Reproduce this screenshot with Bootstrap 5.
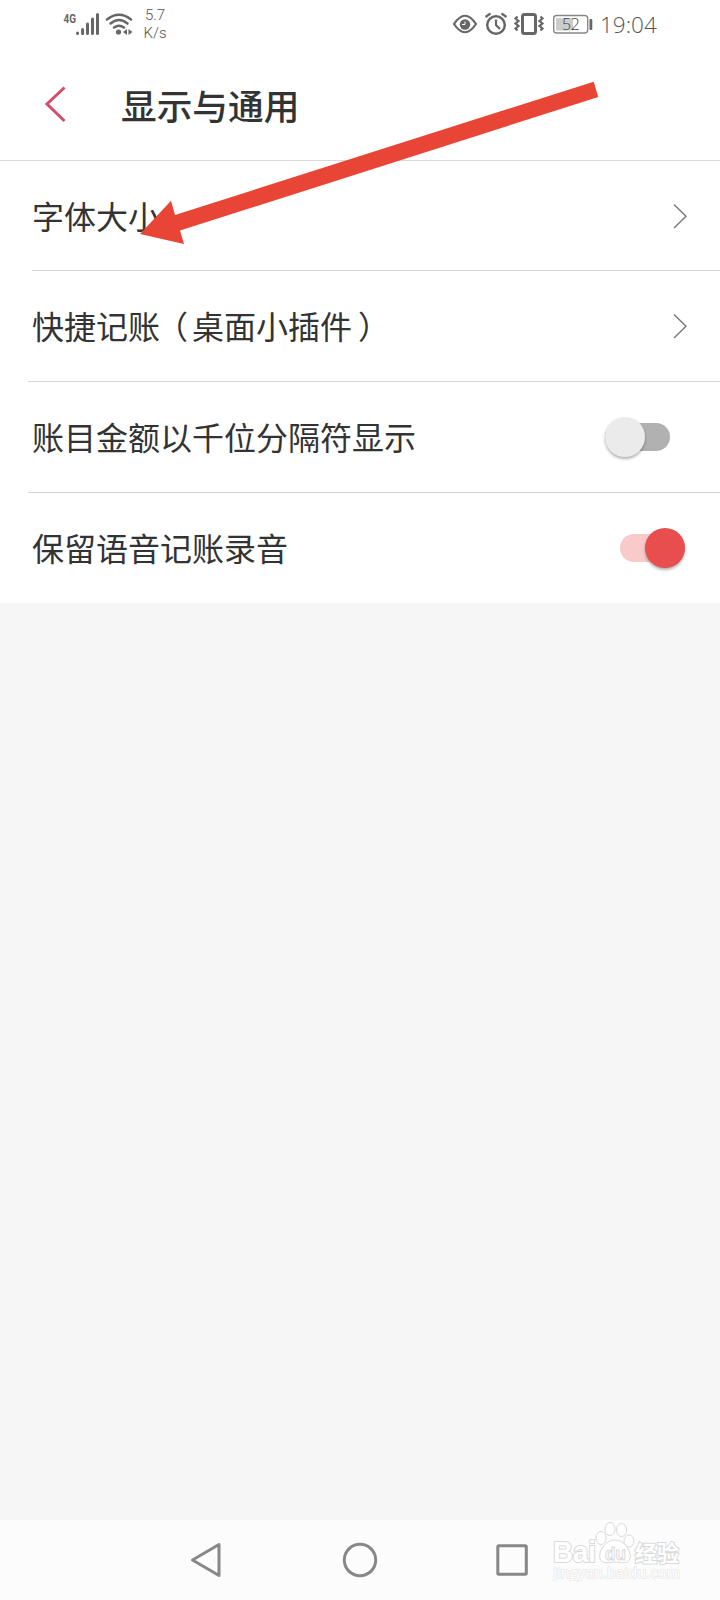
<!DOCTYPE html>
<html lang="zh-CN">
<head>
<meta charset="utf-8">
<meta name="viewport" content="width=device-width, initial-scale=1">
<title>显示与通用</title>
<link href="https://cdn.jsdelivr.net/npm/bootstrap@5.3.0/dist/css/bootstrap.min.css" rel="stylesheet">
<style>
body{font-family:"Noto Sans CJK SC",sans-serif;background:#f6f6f6;color:#333;height:1600px;overflow:hidden}
svg{display:block;flex:none}
.statusbar{height:50px;padding:0 63px 0 63px;color:#666}
.speed{font:300 15px/18px Roboto,sans-serif;padding-top:6px;margin-left:5px;color:#555;width:30px;text-align:center}
.clock{font:300 22.5px/49px "Open Sans",sans-serif;color:#555;width:57px;margin-left:2px;white-space:nowrap}
.titlebar{height:111px;padding:0 44px 0 44px;border-bottom:1px solid #d7dadc}
.titlebar h1{font-size:35.7px;font-weight:500;line-height:54px;margin:0 0 0 55px;color:#333}
.setting{height:111px;margin-left:28px;padding:0 32px 0 4px;border-bottom:1px solid #d6d6d6;font-size:32px;line-height:48px}
.setting>span{margin-bottom:3px}
.setting.first{height:110px;margin-left:32px;padding-left:0}
.setting.first>span{margin-bottom:2px}
.setting.last{height:110px;border-bottom:0}
.open-paren{margin:0 4px 0 -4px}
.close-paren{margin:0 -6px 0 6px}
.toggle{width:65px;height:28px;border-radius:14px;background:#b1b1b1}
.toggle.off{margin-right:18px}
.toggle.on{background:#f9caca;margin-right:3px}
.knob{width:40px;height:40px;border-radius:50%;background:#ebebeb;box-shadow:0 2px 3px rgba(0,0,0,.3);flex:none}
.on .knob{background:#e84e4e}
.navkeys{height:80px;background:#fcfcfc;padding-left:190px}
.watermark{width:130px;height:62px;margin-left:24px}
.pointer{left:130px;top:70px}
</style>
</head>
<body class="d-flex flex-column position-relative">
<div class="bg-white">
  <header class="statusbar d-flex justify-content-between">
    <div class="d-flex">
      <svg width="72" height="50" viewBox="63 0 72 50">
        <text x="63.5" y="22.5" font-family="Roboto" font-weight="700" font-size="12.5" textLength="12.5" lengthAdjust="spacingAndGlyphs" fill="#666">4G</text>
        <g stroke="#666" stroke-width="3" stroke-linecap="round"><path d="M77.500 33v.5M82.600 29.500v4M87.500 24v9.500M92.500 19v14.500M97.500 14.500v19"/></g>
        <g fill="none" stroke="#666" stroke-width="2.500" stroke-linecap="round"><path d="M107 19.500Q119 10 131 19.500M110.500 23.500Q119 16.500 127.500 23.500M114 27.500Q119 24 124 27.500"/></g>
        <circle cx="118.500" cy="32" r="2.600" fill="#666"/><path d="M127 29v6l-4-3zM128.500 29v6l4-3z" fill="#666"/>
      </svg>
      <div class="speed">5.7<br>K/s</div>
    </div>
    <div class="d-flex">
      <svg width="147" height="50" viewBox="451 0 147 50">
        <g fill="none" stroke="#666" stroke-width="2.200">
          <path d="M454 24Q465 7.500 476 24Q465 40.500 454 24Z"/>
          <circle cx="496" cy="25" r="8.800" stroke-width="2.500"/><path d="M496 19.500V25l4 4M485.500 17l5-3.500M501.500 13.500l5 3.500"/>
          <rect x="522.500" y="14.500" width="13" height="19" rx="2" stroke-width="3"/>
          <path d="M517.500 16.500l-2 2 3 2.500-3 2.500 3 2.500-3 2.500 2 2M540.500 16.500l2 2-3 2.500 3 2.500-3 2.500 3 2.500-2 2" stroke-width="2.200"/>
          <rect x="553.700" y="15.500" width="34" height="17.500" rx="3" stroke="#888" stroke-width="1.400"/>
        </g>
        <circle cx="465" cy="24.500" r="5.200" fill="#666"/><path d="M465 21.500v3h-3" fill="none" stroke="#fff" stroke-width="1"/>
        <rect x="556" y="18" width="17" height="12.500" fill="#ccc"/>
        <rect x="589.500" y="19" width="2.800" height="11" rx="1" fill="#666"/>
        <text x="562" y="30" font-family="Open Sans" font-weight="300" font-size="16" textLength="18" fill="#444">52</text>
      </svg>
      <div class="clock">19:04</div>
    </div>
  </header>
  <div class="titlebar d-flex align-items-center">
    <svg width="22" height="38" viewBox="0 0 22 38"><path d="M20.500 1.500L3 18L20.500 35" fill="none" stroke="#d64d67" stroke-width="3"/></svg>
    <h1>显示与通用</h1>
  </div>
  <main>
    <div class="setting first d-flex align-items-center justify-content-between"><span>字体大小</span>
      <svg width="15" height="26" viewBox="0 0 15 26"><path d="M1 1.500L13 13.300L1 25" fill="none" stroke="#777" stroke-width="1.400"/></svg></div>
    <div class="setting d-flex align-items-center justify-content-between"><span class="text-nowrap">快捷记账<span class="open-paren">（</span>桌面小插件<span class="close-paren">）</span></span>
      <svg width="15" height="26" viewBox="0 0 15 26"><path d="M1 1.500L13 13.300L1 25" fill="none" stroke="#777" stroke-width="1.400"/></svg></div>
    <div class="setting d-flex align-items-center justify-content-between"><span>账目金额以千位分隔符显示</span>
      <div class="toggle off d-flex align-items-center"><div class="knob"></div></div></div>
    <div class="setting last d-flex align-items-center justify-content-between"><span>保留语音记账录音</span>
      <div class="toggle on d-flex align-items-center justify-content-end"><div class="knob"></div></div></div>
  </main>
</div>
<footer class="navkeys d-flex align-items-center mt-auto">
  <svg width="338" height="40" viewBox="190 1540 338 40" fill="none" stroke="#888" stroke-width="3" stroke-linejoin="round">
    <path d="M192.500 1560L219 1544.500V1575.500Z"/><circle cx="360" cy="1560" r="15.700"/><rect x="497.800" y="1545.800" width="28.500" height="28.500" rx="1"/>
  </svg>
  <svg class="watermark align-self-start" viewBox="552 1520 130 62" fill="#fff" stroke="#d9d9d9" stroke-width="1">
    <g font-family="Liberation Sans" font-weight="700" paint-order="stroke" stroke-width="2">
      <text x="553" y="1562" font-size="29" textLength="43" lengthAdjust="spacingAndGlyphs">Bai</text>
      <text x="635" y="1560.500" font-family="Noto Sans CJK SC" font-size="22" textLength="44">经验</text>
    </g>
    <path d="M615 1540C605 1540 598 1552 600 1559C603 1565 610 1562 615 1562S627 1565 630 1559C632 1552 625 1540 615 1540Z"/>
    <ellipse cx="601" cy="1538" rx="5" ry="6.500"/><ellipse cx="610" cy="1529" rx="5" ry="6.500"/><ellipse cx="621.500" cy="1530" rx="5" ry="6.500"/><ellipse cx="629" cy="1541" rx="5" ry="6"/>
    <text x="605" y="1560" font-family="Liberation Sans" font-weight="700" font-size="19" textLength="21" lengthAdjust="spacingAndGlyphs">du</text>
    <text x="553" y="1578" font-family="Open Sans" font-size="14.500" textLength="127" stroke="#e8e8e8" paint-order="stroke" stroke-width="1.500">jingyan.baidu.com</text>
  </svg>
</footer>
<svg class="pointer position-absolute" width="480" height="180" viewBox="130 70 480 180"><path d="M140 234L171 200.700L175 215L593.700 81.700L598.300 97L180 230.500L184 244Z" fill="#e94536"/></svg>
<script src="https://cdn.jsdelivr.net/npm/bootstrap@5.3.0/dist/js/bootstrap.bundle.min.js"></script>
</body>
</html>
